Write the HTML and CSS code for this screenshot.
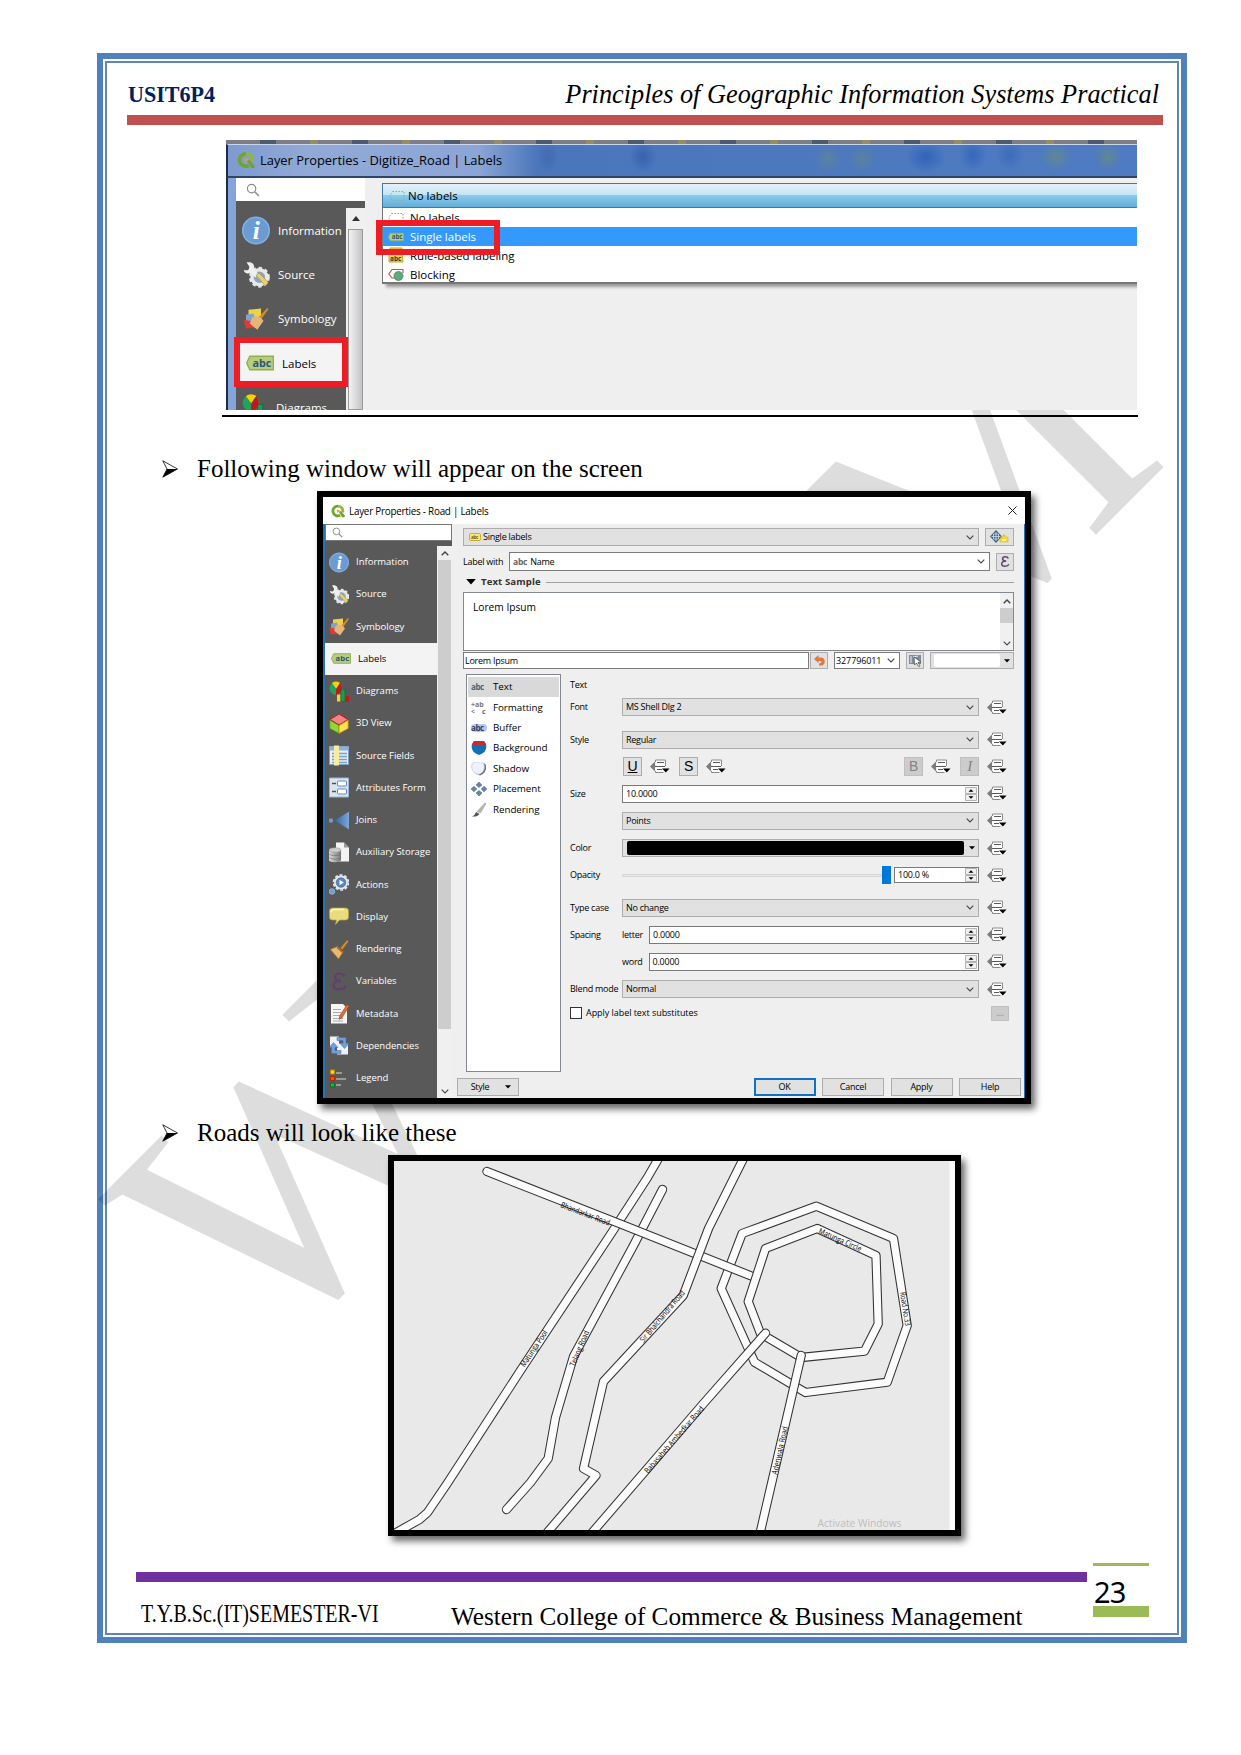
FILE: index.html
```html
<!DOCTYPE html>
<html lang="en">
<head>
<meta charset="utf-8">
<title>USIT6P4 - Principles of Geographic Information Systems Practical</title>
<link rel="stylesheet" href="styles.css">
</head>
<body>
<svg class="defs" width="0" height="0" aria-hidden="true">
  <defs>
    <linearGradient id="g-joins"><stop offset="0" stop-color="#2f68ae"/><stop offset="1" stop-color="#7fa6d6"/></linearGradient>
    <linearGradient id="g-cyl"><stop offset="0" stop-color="#ddd"/><stop offset="1" stop-color="#777"/></linearGradient>
  </defs>
  <symbol id="qgis" viewBox="0 0 20 20"><path d="M10 3a7 7 0 1 0 3 13.2" fill="none" stroke="#6fa52f" stroke-width="4"/><path d="M10 3a7 7 0 0 1 6.600 9" fill="none" stroke="#8fb93a" stroke-width="4"/><path d="M11 11l3-1 5.500 6v3h-3.500z" fill="#6fa52f"/><path d="M8 8l5 1-4 4z" fill="#ee9b2c"/></symbol>
  <symbol id="search" viewBox="0 0 20 20"><circle cx="8" cy="8" r="6" fill="none" stroke="#888" stroke-width="1.700"/><path d="M12.500 12.500l6 6" stroke="#888" stroke-width="2.200"/></symbol>
  <symbol id="info" viewBox="0 0 20 20"><circle cx="10" cy="10" r="10" fill="#6a9bd2"/><circle cx="10" cy="10" r="9.400" fill="none" stroke="#86afdd"/><text x="10.200" y="16" text-anchor="middle" font-family="Liberation Serif, serif" font-weight="bold" font-style="italic" font-size="18" fill="#fff">i</text></symbol>
  <symbol id="source" viewBox="0 0 20 20"><circle cx="12.500" cy="12" r="5.500" fill="#8ba5c9" stroke="#e6e8ea" stroke-width="2.500"/><circle cx="12.500" cy="12" r="7" fill="none" stroke="#e6e8ea" stroke-width="1.500" stroke-dasharray="2.600 2"/><path d="M1 6.500c3 1 4 0 4-2.500L3 1c4-.8 6.500 1.500 5.500 5l3.500 4-2.500 2.200L6 8.500C4 10 1 9 1 6.500z" fill="#f0f0f0"/><path d="M10 10.500l7 8 2-2.500-6.500-7z" fill="#e8cf71" stroke="#a98d32" stroke-width=".5"/></symbol>
  <symbol id="symbology" viewBox="0 0 20 20"><path d="M4 3l10-1v9L4 10z" fill="#efd24a"/><path d="M2 7l6-1 2 7-8 2z" fill="#7da3cf"/><path d="M0 11l6 1 6 5-10 1z" fill="#df3a36"/><path d="M7 9l6-1 3 4-5 7-6-5z" fill="#e5b57a"/><path d="M12.500 8.500L19 1.500l1 1-5.500 7.500z" fill="#d88b23"/></symbol>
  <symbol id="labels" viewBox="0 0 22 12"><path d="M.5 6L3 .7h18.500v10.600H3z" fill="#b6cd7b" stroke="#8fae4f" stroke-width="1"/><text x="12.500" y="8.800" text-anchor="middle" font-family="Open Sans, sans-serif" font-size="8.500" font-weight="bold" fill="#30567a">abc</text></symbol>
  <symbol id="diagrams" viewBox="0 0 20 20"><circle cx="7" cy="7" r="6.500" fill="#1fa55a"/><path d="M7 7L3 1.500a7 7 0 0 1 8 0z" fill="#fc0"/><path d="M7 8l4-6.500q4 5 0 10L7 14z" fill="#c4161c"/><path d="M8 13h3.500v7H8z" fill="#fc3"/><path d="M12 8h4v12h-4z" fill="#1b9b54" stroke="#0a6b34" stroke-width=".6"/><path d="M16.500 14.500H20V20h-3.500z" fill="#c4161c"/></symbol>
  <symbol id="view3d" viewBox="0 0 20 20"><path d="M10 .5L19 6l-9 5.500L1 6z" fill="#f58585" stroke="#b71c1c" stroke-width="1"/><path d="M.8 6.500L10 12v8L.8 15z" fill="#93d736" stroke="#4c8a12" stroke-width=".8"/><path d="M19.200 6.500L10 12v8l9.200-5z" fill="#ffe04d" stroke="#b58f10" stroke-width=".8"/></symbol>
  <symbol id="fields" viewBox="0 0 20 20"><path d="M.5 1h19v18H.5z" fill="#e9eef4" stroke="#7f9fc6"/><path d="M.5 1h19v4H.5z" fill="#8db0dc"/><path d="M3 8h15M3 11h15M3 14h15M3 17h15" stroke="#7f9fc6" stroke-width="1.300"/><path d="M5 0h5v20H5z" fill="#f5eea0"/></symbol>
  <symbol id="form" viewBox="0 0 20 20"><path d="M.5.5h19v19H.5z" fill="#dce5ef" stroke="#9bb3cf"/><path d="M3 6h4M3 14h4" stroke="#456" stroke-width="1.500"/><rect x="8.500" y="3.500" width="9" height="5" rx="1" fill="#fff" stroke="#5d8cc4"/><rect x="8.500" y="11.500" width="9" height="5" rx="1" fill="#fff" stroke="#5d8cc4"/></symbol>
  <symbol id="joins" viewBox="0 0 20 20"><circle cx="2" cy="10" r="2.200" fill="#6c9bd2"/><path d="M6 10L20 1v18z" fill="url(#g-joins)"/></symbol>
  <symbol id="aux" viewBox="0 0 20 20"><path d="M7 0h8l5 5v14H7z" fill="#f4f4f4"/><path d="M15 0v5h5z" fill="#999"/><path d="M0 7.500v10c0 3 12 3 12 0v-10z" fill="url(#g-cyl)"/><ellipse cx="6" cy="7.500" rx="6" ry="2.300" fill="#ccc" stroke="#888" stroke-width=".5"/><path d="M0 11c0 2.800 12 2.800 12 0M0 14.500c0 2.800 12 2.800 12 0" fill="none" stroke="#666" stroke-width=".6"/></symbol>
  <symbol id="actions" viewBox="0 0 20 20"><circle cx="12" cy="8" r="7" fill="#e8eaec"/><circle cx="12" cy="8" r="7.500" fill="none" stroke="#e8eaec" stroke-width="1.600" stroke-dasharray="3 1.800"/><circle cx="12" cy="8" r="4.800" fill="#5587c1" stroke="#2f5f9a" stroke-width=".6"/><path d="M10.500 5.200v5.600l4.300-2.800z" fill="#fff"/><circle cx="3" cy="17" r="2.800" fill="#6d9fd8" stroke="#9bc" stroke-width=".8"/></symbol>
  <symbol id="display" viewBox="0 0 20 20"><path d="M3.500 1.500h13a3 3 0 0 1 3 3v6a3 3 0 0 1-3 3h-6L6.500 18l1-4.500h-4a3 3 0 0 1-3-3v-6a3 3 0 0 1 3-3z" fill="#e9dc7c" stroke="#b9a53f" stroke-width=".7"/><path d="M2 6q0-3 3-3h10" fill="none" stroke="#faf6c8" stroke-width="1.500"/></symbol>
  <symbol id="render" viewBox="0 0 20 20"><path d="M11.500 8.500L18 .8l1.500 1L13.500 10z" fill="#d98c22"/><path d="M1.500 10l7-3 5.500 5.500-4.500 6.800z" fill="#e5ba73" stroke="#b9812f" stroke-width=".7"/><path d="M8 7.500L14 13" stroke="#b56a12" stroke-width="1.800"/></symbol>
  <symbol id="eps" viewBox="0 0 20 20"><path d="M15.500 5C14 1 6 1.300 6 5.500 6 8 8.500 9.200 12 9.200 8 9.200 4.500 10.500 4.500 14c0 5 10 5 12 .5" fill="none" stroke="#633f70" stroke-width="2.400"/></symbol>
  <symbol id="meta" viewBox="0 0 20 20"><path d="M2 .5h12l4 4V20H2z" fill="#f6f6f6"/><path d="M4 6h8M4 9h8M4 12h7M4 15h10M4 17.500h10" stroke="#aaa"/><path d="M18 1l2.200 1.500-7 11.500-3 2 .3-3.600z" fill="#dd6d33" stroke="#8b3c15" stroke-width=".5"/></symbol>
  <symbol id="deps" viewBox="0 0 20 20"><path d="M1 1h9v10H1zM8 8h11v11H8z" fill="#eef2f8"/><path d="M8 2h9v6h3l-4.500 5L11 8h3V5H8z" fill="#6f9fe0" stroke="#3b6cb5" stroke-width=".5"/><path d="M12 18H2.500v-6H0l4.500-5L9 12H6v3h6z" fill="#6f9fe0" stroke="#3b6cb5" stroke-width=".5"/></symbol>
  <symbol id="legend" viewBox="0 0 20 20"><path d="M1.500 1.500h4v4h-4z" fill="#ffd91a" stroke="#b98b0a"/><path d="M1.500 8h4v4h-4z" fill="#ff4a10" stroke="#a52c05"/><path d="M1.500 14.500h4v4h-4z" fill="#1cb35a" stroke="#0d6b32"/><path d="M7 4.500h6M7 10.500h10M7 16.500h5" stroke="#999" stroke-width="2"/></symbol>
  <symbol id="dd" viewBox="0 0 20 15"><path d="M0 7.500L5 2.500v10z" fill="#7c7c7c"/><path d="M5.500 13.500V1h10v12.500z" fill="#fff"/><path d="M5.500 3V1h10v6M5.500 12v1.500h8" fill="none" stroke="#8a8a8a"/><path d="M7 3.500h7M5 7.500h10M7 10.500h5" stroke="#5a5a5a" stroke-width="1.200"/><path d="M12 9.500h7.500l-3.700 4z" fill="#000"/></symbol>
  <symbol id="down" viewBox="0 0 8 5"><path d="M.7.7L4 4 7.300.7" fill="none" stroke="#444" stroke-width="1.100"/></symbol>
  <symbol id="up" viewBox="0 0 8 5"><path d="M.7 4.300L4 1l3.300 3.300" fill="none" stroke="#444" stroke-width="1.400"/></symbol>
  <symbol id="spin" viewBox="0 0 12 14"><path d="M.5.500h11v6H.5zM.5 7.500h11v6H.5z" fill="#f0f0f0" stroke="#b4b4b4"/><path d="M3.500 4.800L6 2.200l2.500 2.600zM3.500 9.200L6 11.800l2.500-2.600z" fill="#000"/></symbol>
  <symbol id="tri" viewBox="0 0 8 5"><path d="M0 0h8L4 4.600z" fill="#000"/></symbol>
  <symbol id="arrow" viewBox="0 0 16 18"><path d="M.8.800L15.500 9 .8 17.200 5 9z" fill="#fff" stroke="#000" stroke-width=".8"/><path d="M5 9h10.500L.8 17.200z" fill="#000"/></symbol>
</svg>

<div class="sheet">
  <div class="frame"><div class="frame-inner">
    <header class="head">
      <span class="code">USIT6P4</span>
      <span class="course">Principles of Geographic Information Systems Practical</span>
    </header>
    <div class="rule-red"></div>

    <section class="shot1">
      <div class="s1-strip"></div>
      <div class="s1-title"><svg width="20" height="18"><use href="#qgis"/></svg><span>Layer Properties - Digitize_Road | Labels</span></div>
      <div class="s1-body">
        <div class="s1-side">
          <div class="s1-search"><svg width="14" height="14"><use href="#search"/></svg></div>
          <div class="s1-cols">
            <ul class="s1-nav">
              <li><svg width="28" height="29"><use href="#info"/></svg>Information</li>
              <li><svg width="28" height="27"><use href="#source"/></svg>Source</li>
              <li><svg width="28" height="25"><use href="#symbology"/></svg>Symbology</li>
              <li class="on"><svg width="28" height="16"><use href="#labels"/></svg>Labels</li>
              <li><svg width="26" height="32"><use href="#diagrams"/></svg>Diagrams</li>
            </ul>
            <div class="s1-scroll"><svg width="8" height="5" viewBox="0 0 8 5"><path d="M0 5L4 0l4 5z" fill="#333"/></svg><i></i></div>
          </div>
        </div>
        <div class="s1-main">
          <div class="s1-combo"><svg width="16" height="12" viewBox="0 0 16 12"><path d="M3.500 1.500H15v9H3.500L.8 6z" fill="none" stroke="#8aa" stroke-dasharray="1.500 1.500"/></svg>No labels</div>
          <div class="s1-list">
            <div><svg width="16" height="12" viewBox="0 0 16 12"><path d="M3.500 1.500H15v9H3.500L.8 6z" fill="none" stroke="#999" stroke-dasharray="1.500 1.500"/></svg>No labels</div>
            <div class="on"><svg width="16" height="10"><use href="#labels"/></svg>Single labels</div>
            <div><svg width="16" height="17" viewBox="0 0 16 17"><path d="M2 1h12v5H2zM1 6h13l1 9H1z" fill="#f2da4b" stroke="#c5a81a"/><text x="2" y="13.500" font-family="Open Sans, sans-serif" font-weight="bold" font-size="6.500" fill="#333">abc</text></svg>Rule-based labeling</div>
            <div><svg width="16" height="13" viewBox="0 0 16 13"><path d="M7 10H4L.8 6 4 1.500h11V5" fill="#fff" stroke="#d0525a" stroke-width="1.200"/><circle cx="10.500" cy="8" r="4.500" fill="#5faa7c" stroke="#3d7c58" stroke-width=".7"/></svg>Blocking</div>
          </div>
        </div>
      </div>
      <div class="mark mark-nav"></div>
      <div class="mark mark-list"></div>
    </section>
    <div class="underline"></div>

    <p class="bullet b1"><svg width="16" height="18"><use href="#arrow"/></svg><span>Following window will appear on the screen</span></p>

    <section class="dialog">
      <div class="d-title"><svg width="14" height="14"><use href="#qgis"/></svg><span>Layer Properties - Road | Labels</span><svg class="close" width="9" height="9" viewBox="0 0 9 9"><path d="M.5.500l8 8M8.500.500l-8 8" stroke="#222" stroke-width="1"/></svg></div>
      <div class="d-body">
        <aside class="d-side">
          <div class="d-search"><svg width="11" height="11"><use href="#search"/></svg></div>
          <div class="d-cols">
            <ul class="d-nav">
              <li><svg><use href="#info"/></svg>Information</li>
              <li><svg><use href="#source"/></svg>Source</li>
              <li><svg><use href="#symbology"/></svg>Symbology</li>
              <li class="on"><svg><use href="#labels"/></svg>Labels</li>
              <li><svg><use href="#diagrams"/></svg>Diagrams</li>
              <li><svg><use href="#view3d"/></svg>3D View</li>
              <li><svg><use href="#fields"/></svg>Source Fields</li>
              <li><svg><use href="#form"/></svg>Attributes Form</li>
              <li><svg><use href="#joins"/></svg>Joins</li>
              <li><svg><use href="#aux"/></svg>Auxiliary Storage</li>
              <li><svg><use href="#actions"/></svg>Actions</li>
              <li><svg><use href="#display"/></svg>Display</li>
              <li><svg><use href="#render"/></svg>Rendering</li>
              <li><svg><use href="#eps"/></svg>Variables</li>
              <li><svg><use href="#meta"/></svg>Metadata</li>
              <li><svg><use href="#deps"/></svg>Dependencies</li>
              <li><svg><use href="#legend"/></svg>Legend</li>
            </ul>
            <div class="d-scroll"><svg width="8" height="5"><use href="#up"/></svg><i></i><svg width="8" height="5"><use href="#down"/></svg></div>
          </div>
        </aside>
        <main class="d-main">
          <div class="r-mode">
            <div class="combo"><svg width="12" height="8" viewBox="0 0 12 8"><rect x=".5" y=".5" width="11" height="7" rx="1.500" fill="#ffe96b" stroke="#cfae1b"/><text x="2" y="5.800" font-family="Open Sans, sans-serif" font-weight="bold" font-size="4.500" fill="#555">abc</text></svg><span>Single labels</span><svg class="chev"><use href="#down"/></svg></div>
            <div class="btn place"><svg width="19" height="14" viewBox="0 0 19 14"><path d="M6 0l6 6.500L6 13 0 6.500z" fill="#3e6484"/><path d="M6 2v9M1.500 6.500h9M3.500 4h5v5h-5z" stroke="#c9d6e2" stroke-width=".9" fill="none"/><path d="M10 8h3V5h2v2h3v5h-8z" fill="#f7dc32" stroke="#d5b512" stroke-width=".6"/><path d="M12 10h4" stroke="#fff"/></svg></div>
          </div>
          <div class="r-with"><label>Label with</label>
            <div class="combo white"><b>abc</b><span>Name</span><svg class="chev"><use href="#down"/></svg></div>
            <div class="btn"><svg width="12" height="13"><use href="#eps"/></svg></div>
          </div>
          <div class="r-group"><svg width="10" height="7"><use href="#tri"/></svg><b>Text Sample</b><i></i></div>
          <div class="r-sample"><span>Lorem Ipsum</span><div class="mini-scroll"><svg width="8" height="5"><use href="#up"/></svg><i></i><svg width="8" height="5"><use href="#down"/></svg></div></div>
          <div class="r-tools">
            <div class="input">Lorem Ipsum</div>
            <div class="btn undo"><svg width="11" height="11" viewBox="0 0 11 11"><path d="M0 4L4.500 0v2.500H7c5 0 5 8 0 8H5v-2c3 0 3-2.500 1-2.500H4.500V8z" fill="#dd7b3c"/></svg></div>
            <div class="combo white seed"><span>327796011</span><svg class="chev"><use href="#down"/></svg></div>
            <div class="btn pick"><svg width="13" height="13" viewBox="0 0 13 13"><path d="M0 1h12v9H0z" fill="#7f8da0"/><path d="M2 2v7M4 3l5-1" stroke="#e8eef5"/><path d="M5 3l7 5-3 .4 2 3.500-1.500.8L7.500 9 5.500 11z" fill="#fff" stroke="#444" stroke-width=".7"/></svg></div>
            <div class="btn swatch"><i></i><svg width="6" height="4"><use href="#tri"/></svg></div>
          </div>
          <div class="split">
            <ul class="cats">
              <li class="on"><b class="c-text">abc</b>Text</li>
              <li><svg viewBox="0 0 16 13"><text x="0" y="5.500" font-family="Open Sans, sans-serif" font-size="7" font-weight="bold" fill="#777">+ab</text><text x="0" y="12" font-family="Open Sans, sans-serif" font-size="7" font-weight="bold" fill="#777">&lt;</text><text x="11" y="12" font-family="Open Sans, sans-serif" font-size="7" font-weight="bold" fill="#666">c</text></svg>Formatting</li>
              <li><b class="c-buf">abc</b>Buffer</li>
              <li><svg viewBox="0 0 16 14"><path d="M1 3L3 0h10l2 3q2 8-7 11Q-1 11 1 3z" fill="#0f70b8"/><path d="M1 4L3 0h10l2 4z" fill="#c52d33"/></svg>Background</li>
              <li><svg viewBox="0 0 16 14"><path d="M2 3l2-2h9l2 2q1 8-6 10.500Q1 11 2 3z" fill="#6b7080"/><path d="M1 2l2-2h8l2 2q2 8-5.500 10.500Q-1 10 1 2z" fill="#edf2fd" stroke="#b5c0d8" stroke-width=".6"/></svg>Shadow</li>
              <li><svg viewBox="0 0 16 14"><path d="M8 0l3 3-3 2.500L5 3zM8 14l3-3-3-2.500L5 11zM0 7l3-2.800L5.800 7 3 9.800zM16 7l-3-2.800L10.200 7 13 9.800z" fill="#6786a3" stroke="#40617e" stroke-width=".5"/></svg>Placement</li>
              <li><svg viewBox="0 0 16 14"><path d="M1 13.500q3-1 4-4.500l3.500 2q-2 3-7.500 2.500z" fill="#555"/><path d="M6 8.500L14 0l1 .5L9.500 10z" fill="#b5b5ad" stroke="#888" stroke-width=".4"/></svg>Rendering</li>
            </ul>
            <div class="form">
              <div class="row"><label>Text</label></div>
              <div class="row"><label>Font</label><div class="combo"><span>MS Shell Dlg 2</span><svg class="chev"><use href="#down"/></svg></div><svg class="dd"><use href="#dd"/></svg></div>
              <div class="row"><label>Style</label><div class="combo"><span>Regular</span><svg class="chev"><use href="#down"/></svg></div><svg class="dd"><use href="#dd"/></svg></div>
              <div class="row marks"><label></label><div class="btn"><u>U</u></div><svg class="dd"><use href="#dd"/></svg><div class="btn">S</div><svg class="dd"><use href="#dd"/></svg><span class="grow"></span><div class="btn off">B</div><svg class="dd"><use href="#dd"/></svg><div class="btn off"><em>I</em></div><svg class="dd"><use href="#dd"/></svg></div>
              <div class="row"><label>Size</label><div class="combo white"><span>10.0000</span><svg class="spin"><use href="#spin"/></svg></div><svg class="dd"><use href="#dd"/></svg></div>
              <div class="row"><label></label><div class="combo"><span>Points</span><svg class="chev"><use href="#down"/></svg></div><svg class="dd"><use href="#dd"/></svg></div>
              <div class="row"><label>Color</label><div class="combo ink"><i></i><svg width="6" height="4"><use href="#tri"/></svg></div><svg class="dd"><use href="#dd"/></svg></div>
              <div class="row"><label>Opacity</label><div class="slider"><i></i><b></b></div><div class="combo white pct"><span>100.0 %</span><svg class="spin"><use href="#spin"/></svg></div><svg class="dd"><use href="#dd"/></svg></div>
              <div class="row"><label>Type case</label><div class="combo"><span>No change</span><svg class="chev"><use href="#down"/></svg></div><svg class="dd"><use href="#dd"/></svg></div>
              <div class="row"><label>Spacing</label><label class="sub">letter</label><div class="combo white"><span>0.0000</span><svg class="spin"><use href="#spin"/></svg></div><svg class="dd"><use href="#dd"/></svg></div>
              <div class="row"><label></label><label class="sub">word</label><div class="combo white"><span>0.0000</span><svg class="spin"><use href="#spin"/></svg></div><svg class="dd"><use href="#dd"/></svg></div>
              <div class="row"><label>Blend mode</label><div class="combo"><span>Normal</span><svg class="chev"><use href="#down"/></svg></div><svg class="dd"><use href="#dd"/></svg></div>
              <div class="row subst"><i class="check"></i><span>Apply label text substitutes</span><div class="btn off more">...</div></div>
            </div>
          </div>
          <div class="d-foot"><div class="btn style">Style<svg width="6" height="4"><use href="#tri"/></svg></div><span class="grow"></span><div class="btn ok">OK</div><div class="btn">Cancel</div><div class="btn">Apply</div><div class="btn">Help</div></div>
        </main>
      </div>
    </section>

    <p class="bullet b2"><svg width="16" height="18"><use href="#arrow"/></svg><span>Roads will look like these</span></p>

    <section class="map">
      <svg width="561" height="369" viewBox="393.500 1160.500 561 369">
        <rect x="393" y="1160" width="562" height="370" fill="#e9e9e9"/>
        <rect x="949" y="1160" width="6" height="370" fill="#fbfbfb"/>
        <g class="road">
          <path d="M816 1205.700L893 1238 906.700 1325 886.700 1381.700 805 1392 754 1361.700 720.700 1288 741.700 1233z"/>
          <path class="in" d="M816 1205.700L893 1238 906.700 1325 886.700 1381.700 805 1392 754 1361.700 720.700 1288 741.700 1233z"/>
          <path d="M658 1158L647 1177 610 1234 520 1370 446.700 1483 427 1512 419 1519 394 1533"/>
          <path class="in" d="M658 1158L647 1177 610 1234 520 1370 446.700 1483 427 1512 419 1519 394 1533"/>
          <path d="M662 1189L633 1245 573 1356 555 1417 547.700 1458 530 1482 506 1509"/>
          <path class="in" d="M662 1189L633 1245 573 1356 555 1417 547.700 1458 530 1482 506 1509"/>
          <path d="M486.500 1171L620 1223.500 752 1276"/>
          <path class="in" d="M486.500 1171L620 1223.500 752 1276"/>
          <path d="M816.700 1228L875.500 1255 877.700 1323.500 864 1350.700 800.700 1357 760 1333 747.700 1301 765 1248z"/>
          <path class="in" d="M816.700 1228L875.500 1255 877.700 1323.500 864 1350.700 800.700 1357 760 1333 747.700 1301 765 1248z"/>
          <path d="M744 1156L708 1228 682.700 1295 603 1381 583 1468 595.500 1475 545 1534"/>
          <path class="in" d="M744 1156L708 1228 682.700 1295 603 1381 583 1468 595.500 1475 545 1534"/>
          <path d="M765 1332.700L703 1403 590 1534"/>
          <path class="in" d="M765 1332.700L703 1403 590 1534"/>
          <path d="M800.700 1355L759 1535"/>
          <path class="in" d="M800.700 1355L759 1535"/>
        </g>
        <g class="names">
          <text transform="translate(559.500 1206.500) rotate(21)" textLength="52" lengthAdjust="spacingAndGlyphs">Bhandarkar Road</text>
          <text transform="translate(524 1367) rotate(-56)" textLength="42" lengthAdjust="spacingAndGlyphs">Matunga Pool</text>
          <text transform="translate(574 1366.500) rotate(-67)" textLength="38" lengthAdjust="spacingAndGlyphs">Telang Road</text>
          <text transform="translate(643 1342.500) rotate(-50)" textLength="65" lengthAdjust="spacingAndGlyphs">Sir Bhalchandra Road</text>
          <text transform="translate(647.500 1473.500) rotate(-49)" textLength="86" lengthAdjust="spacingAndGlyphs">Babasaheb Ambedkar Road</text>
          <text transform="translate(776.500 1474.500) rotate(-77)" textLength="49" lengthAdjust="spacingAndGlyphs">Adenwala Road</text>
          <text transform="translate(817.500 1232.500) rotate(24)" textLength="46" lengthAdjust="spacingAndGlyphs">Matunga Circle</text>
          <text transform="translate(899.500 1292) rotate(81)" textLength="34" lengthAdjust="spacingAndGlyphs">Road No.33</text>
        </g>
        <text class="activate" x="817" y="1526.500" textLength="84" lengthAdjust="spacingAndGlyphs">Activate Windows</text>
      </svg>
    </section>

    <footer class="foot">
      <div class="foot-left">
        <div class="rule-purple"></div>
        <div class="foot-text"><span class="sem">T.Y.B.Sc.(IT)SEMESTER-VI</span><span class="college">Western College of Commerce &amp; Business Management</span></div>
      </div>
      <div class="pageno"><span>23</span></div>
    </footer>
  </div></div>
  <svg class="watermark" width="1241" height="1755" aria-hidden="true"><g transform="rotate(-45)"><text x="-779" y="1153">W</text><text x="183" y="1153">M</text></g></svg>
</div>
</body>
</html>
```
FILE: styles.css
```css
* { box-sizing: border-box; }
body { margin: 0; background: #fff; color: #000; font-family: "Liberation Serif", serif; }
ul { list-style: none; margin: 0; padding: 0; }
svg { display: block; flex: none; }
.defs { position: absolute; }
.grow { flex: 1; }

.sheet { position: relative; width: 1241px; height: 1755px; padding: 53px 54px 112px 97px; overflow: hidden; }
.frame { width: 1090px; height: 1590px; border: 6px solid #4f81bd; padding: 2px; }
.frame-inner { height: 100%; border: 2px solid #5f86b5; }
.watermark { position: absolute; left: 0; top: 0; z-index: 0; }
.watermark text { font-family: "Liberation Serif", serif; font-size: 360px; fill: rgba(0,0,0,.133); }

/* header */
.head { display: flex; justify-content: space-between; height: 52px; padding: 15px 18px 0 21px; line-height: 32px; white-space: nowrap; }
.code { font-weight: bold; font-size: 24px; color: #002060; transform: scaleX(.92); transform-origin: left; }
.course { font-style: italic; font-size: 27.500px; transform: scaleX(.956); transform-origin: right; }
.rule-red { height: 10px; width: 1036px; margin-left: 20px; background: #c0504d; }

/* first capture */
.shot1 { position: relative; z-index: 1; width: 911px; height: 270px; margin: 15px 0 0 119px; overflow: hidden; background: #efefef; font: 11.500px "Open Sans", sans-serif; white-space: nowrap; }
.s1-strip { height: 4px; background: repeating-linear-gradient(90deg, #7d7e86 0 34px, #4e5a70 34px 50px, #7d7e86 50px 84px, #978c62 84px 92px); }
.s1-title { display: flex; align-items: center; gap: 4px; height: 34px; padding: 0 0 2px 8px; border-top: 1px solid #c8d6ee; border-bottom: 2px solid #2f4568; border-left: 2px solid #1d2b44; background: radial-gradient(ellipse 10px 16px at 320px 12px, rgba(60,95,160,.5), transparent), radial-gradient(ellipse 14px 16px at 415px 12px, rgba(35,80,160,.5), transparent), radial-gradient(ellipse 20px 16px at 698px 12px, rgba(30,85,180,.6), transparent), radial-gradient(ellipse 14px 16px at 745px 10px, rgba(30,85,180,.5), transparent), radial-gradient(ellipse 14px 16px at 782px 10px, rgba(30,85,180,.4), transparent), radial-gradient(ellipse 16px 14px at 828px 12px, rgba(105,140,130,.7), transparent), radial-gradient(ellipse 14px 14px at 880px 12px, rgba(105,140,130,.7), transparent), radial-gradient(ellipse 14px 14px at 600px 14px, rgba(105,140,130,.5), transparent), radial-gradient(ellipse 14px 14px at 634px 14px, rgba(105,140,130,.5), transparent), linear-gradient(90deg, #7d9bd0 0, #91a9d6 80px, #8ba6d6 250px, #4a76bb 310px, #4f7bc2 100%); font-size: 12.900px; }
.s1-body { display: flex; height: 232px; border-left: 2px solid #1d2b44; }
.s1-side { width: 137px; border-left: 8px solid #85a5da; background: #595959; }
.s1-search { height: 23px; padding: 5px 10px; background: #fff; }
.s1-cols { display: flex; }
.s1-nav { width: 110px; padding-top: 7px; color: #fff; }
.s1-nav li { display: flex; align-items: center; height: 44.300px; gap: 8px; padding-left: 6px; }
.s1-nav .on { background: #f4f4f4; color: #000; padding-left: 10px; }
.s1-scroll { width: 19px; height: 202px; margin-top: 7px; background: #f0f0f0; display: flex; flex-direction: column; align-items: center; padding-top: 8px; }
.s1-scroll i { width: 15px; flex: 1; margin-top: 8px; border: 1px solid #999; background: linear-gradient(90deg, #f2f2f2, #c4c4c8); }
.s1-main { flex: 1; padding: 5px 0 0 17px; }
.s1-combo { display: flex; align-items: center; gap: 3px; height: 25px; padding-left: 6px; border: 1px solid #46779f; border-right: 0; background: linear-gradient(#e2f2fb 0, #c2e3f4 50%, #8bcaec 50%, #62aeda 100%); }
.s1-list { height: 76px; border: 1px solid #777; border-width: 0 0 2px 1px; background: #fff; box-shadow: 4px 3px 3px #999; }
.s1-list div { display: flex; align-items: center; gap: 6px; height: 19px; padding-left: 5px; }
.s1-list .on { background: #39f; color: #fff; outline: 1px dotted #c8772c; outline-offset: -1px; }
.mark { position: absolute; border: 6px solid #ee1c25; }
.mark-nav { left: 8px; top: 197px; width: 114px; height: 50px; }
.mark-list { left: 150px; top: 80px; width: 124px; height: 35px; }
.underline { position: relative; z-index: 1; width: 916px; height: 2.500px; margin: 4.500px 0 0 115px; background: #000; }

/* bullets */
.bullet { position: relative; z-index: 1; display: flex; align-items: center; gap: 19px; margin: 0; padding-left: 55px; font-size: 25px; line-height: 30px; white-space: nowrap; }
.b1 { height: 74px; padding-top: 30px; }
.b2 { height: 50.500px; padding-top: 8px; }

/* label properties dialog */
.dialog { position: relative; z-index: 1; width: 714px; height: 613px; margin-left: 210px; border: 6px solid #000; background: #efefef; box-shadow: 4px 5px 7px rgba(0,0,0,.6); font: 9px "Open Sans", sans-serif; letter-spacing: -.25px; white-space: nowrap; line-height: 12px; }
.d-title { display: flex; align-items: center; height: 27px; gap: 4px; padding: 0 8px; background: #fff; font-size: 9.900px; }
.d-title .close { margin-left: auto; }
.d-body { display: flex; height: 574px; }
.d-side { width: 129px; border-left: 2px solid #2573b8; background: #595959; display: flex; flex-direction: column; }
.d-search { height: 17px; padding: 2px 6px; background: #fff; border: 1px solid #777; }
.d-cols { display: flex; flex: 1; }
.d-nav { width: 112px; padding-top: 5px; color: #fff; font-size: 9.500px; letter-spacing: 0; }
.d-nav li { display: flex; align-items: center; gap: 7px; height: 32.250px; padding-left: 4px; }
.d-nav svg { width: 20px; height: 21px; }
.d-nav .on { background: #f3f3f3; color: #000; padding-left: 6px; }
.d-scroll { width: 15px; margin-top: 5px; display: flex; flex-direction: column; align-items: center; padding: 5px 0 4px; background: #f0f0f0; }
.d-scroll i { width: 13px; height: 469px; margin: 4px 0 auto; background: #cdcdcd; }
.d-main { width: 573px; padding: 4px 11px 0; border-right: 1px solid #2573b8; }
.combo { display: flex; align-items: center; flex: 1; height: 18px; padding: 0 3px; border: 1px solid #adadad; background: #e1e1e1; }
.combo .chev { width: 8px; height: 5px; margin: 0 1px 0 auto; }
.combo .spin { width: 12px; height: 14px; margin: 0 -2px 0 auto; }
.combo.white { background: #fff; border-color: #7a7a7a; }
.btn { display: flex; align-items: center; justify-content: center; height: 18px; width: 18px; background: #e1e1e1; border: 1px solid #adadad; }
.r-mode { display: flex; gap: 6px; width: 551px; margin-bottom: 6px; }
.r-mode .combo { padding-left: 5px; gap: 2px; }
.btn.place { width: 29px; }
.r-with { display: flex; align-items: center; gap: 6px; height: 19px; width: 551px; }
.r-with label { width: 40px; }
.r-with .combo { height: 19px; gap: 3px; }
.r-with b { color: #666; font-size: 8.500px; }
.r-group { display: flex; align-items: center; height: 21px; width: 551px; padding: 1px 0 0 3px; gap: 5px; }
.r-group b { font-size: 9.600px; color: #333; letter-spacing: .1px; }
.r-group svg { width: 10px; height: 6px; }
.r-group i { flex: 1; height: 1px; background: #a0a0a0; }
.r-sample { display: flex; justify-content: space-between; width: 551px; height: 59px; border: 1px solid #828790; background: #fff; font-size: 10.200px; letter-spacing: 0; }
.r-sample span { padding: 8px 9px; }
.mini-scroll { display: flex; flex-direction: column; align-items: center; width: 13px; padding: 6px 0 4px; background: #f0f0f0; }
.mini-scroll i { width: 13px; height: 15px; margin: 4px 0 auto; background: #cdcdcd; }
.r-tools { display: flex; width: 551px; margin-top: 1px; height: 17px; }
.r-tools > * { height: 17px; }
.input { width: 346px; padding: 2px 1px; border: 1px solid #7a7a7a; background: #fff; }
.undo { margin-left: 1px; }
.seed { flex: none; width: 66px; margin: 0 6px; padding-left: 1px; letter-spacing: -.1px; }
.btn.swatch { width: 84px; margin-left: 6px; justify-content: space-between; padding: 0 3px; }
.swatch i { width: 66px; height: 13px; border-radius: 2px; background: #fff; }
.split { display: flex; margin-top: 5px; height: 398px; }
.cats { flex: none; width: 95px; height: 398px; margin-left: 3px; padding: 2px 1px; border: 1px solid #828790; background: #fff; font-size: 9.800px; letter-spacing: -.05px; }
.cats li { display: flex; align-items: center; gap: 6px; height: 20.400px; padding-left: 3px; }
.cats .on { background: #d9d9d9; }
.cats svg { width: 16px; height: 14px; }
.cats b { width: 16px; font-size: 8px; line-height: 8px; color: #3f6480; letter-spacing: -.4px; }
.cats .c-buf { border-radius: 4px; background: #b3c9f2; color: #2b3f66; }
.form { flex: none; display: grid; align-items: start; align-content: start; grid-template-rows: 22px 32.500px 25.500px 28.500px 27px 27.500px 27px 32.500px 27px 27px 27.500px 24px 20px; width: 446px; padding: 2px 0 0 9px; }
.row { display: flex; align-items: center; height: 18px; }
.row label { width: 52px; flex: none; }
.row .sub { width: auto; margin-right: 6px; }
.dd { width: 20px; height: 15px; margin-left: 8px; }
.marks { height: 20px; padding-left: 1px; font: 14px "Liberation Sans", sans-serif; }
.marks .btn { width: 19px; height: 19px; margin-left: 9px; }
.marks label + .btn { margin-left: 0; }
.marks .grow + .btn { margin-left: 0; }
.off { background: #ccc; border-color: #bfbfbf; color: #838383; }
.marks em { font-family: "Liberation Serif", serif; font-size: 15px; }
.combo.ink { padding: 0 3px; justify-content: space-between; }
.ink i { width: 337px; height: 14px; margin-left: 1px; border-radius: 2px; background: #000; }
.slider { display: flex; align-items: center; width: 269px; }
.slider i { flex: 1; height: 3px; border: 1px solid #d6d6d6; background: #e7eaea; }
.slider b { width: 9px; height: 18px; background: #0078d7; }
.pct { height: 16px; margin-left: 3px; }
.check { width: 12px; height: 12px; margin-right: 4px; border: 1px solid #333; background: #fff; }
.subst { letter-spacing: -.05px; }
.btn.more { height: 15px; margin: 0 -2px 0 auto; }
.d-foot { display: flex; gap: 6.500px; width: 564px; margin: 6px 0 0 -6px; }
.d-foot .btn { width: 62px; }
.d-foot .style { gap: 16px; padding-left: 6px; }
.d-foot .ok { border: 2px solid #0f72c4; }

/* road map */
.map { position: relative; z-index: 1; width: 573px; height: 381px; margin-left: 280.500px; border: 6px solid #000; box-shadow: 4px 5px 7px rgba(0,0,0,.6); }
.road path { fill: none; stroke: #333; stroke-width: 9.300; stroke-linejoin: round; stroke-linecap: round; }
.road .in { stroke: #fbfbfb; stroke-width: 7.200; }
.names { font: 8px "Open Sans", sans-serif; fill: #000; }
.activate { font: 11.500px "Open Sans", sans-serif; fill: #bdbdbd; }

/* footer */
.foot { position: relative; z-index: 1; display: flex; justify-content: space-between; margin: 27.500px 28px 0 29px; }
.foot-left { width: 951px; padding-top: 9px; }
.rule-purple { height: 10px; background: #7030a0; }
.foot-text { display: flex; padding: 18px 0 0 5px; line-height: 32px; white-space: nowrap; }
.sem { width: 310px; font-size: 25px; transform: translateY(-2px) scaleX(.798); transform-origin: left; }
.college { font-size: 25.250px; }
.pageno { width: 56px; height: 54px; border-top: 3px solid #9bbb59; border-bottom: 11px solid #9bbb59; font: 29px "Noto Sans", sans-serif; letter-spacing: -.8px; line-height: 52px; padding-left: 1px; }
```
